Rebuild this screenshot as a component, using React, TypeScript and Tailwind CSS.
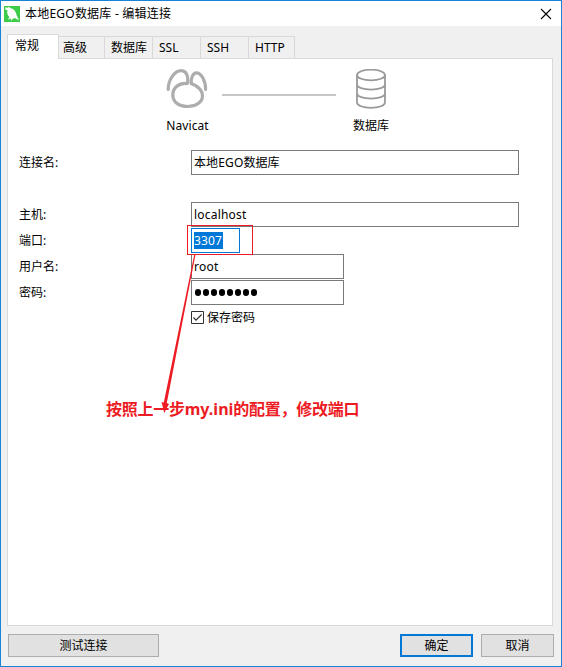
import React from 'react';

const tabs = [
  { label: '高级', width: 'w-[46px]', pad: 'pl-[4px]' },
  { label: '数据库', width: 'w-[48px]', pad: 'pl-[6px]' },
  { label: 'SSL', width: 'w-[48px]', pad: 'pl-[6px]' },
  { label: 'SSH', width: 'w-[48px]', pad: 'pl-[6px]' },
  { label: 'HTTP', width: 'w-[46px]', pad: 'pl-[6px]' },
];

function Row({ label, children }: { label: string; children: React.ReactNode }) {
  return (
    <div className="flex h-[26px] items-start">
      <div className="w-[172px] shrink-0 leading-[25px]">{label}</div>
      {children}
    </div>
  );
}

function Field({ className, children }: { className: string; children: React.ReactNode }) {
  return (
    <div className={`flex h-[25px] shrink-0 items-center border bg-white pl-[2px] leading-[20px] ${className}`}>
      {children}
    </div>
  );
}

function NavicatMark() {
  return (
    <svg className="-ml-px shrink-0" width="44" height="42" viewBox="0 0 44 42" fill="none" stroke="#adadad" strokeWidth="3.2" strokeLinecap="round" strokeLinejoin="round">
      <path d="M22 15.5C13 15 7.8 20 7.8 27C7.8 34 14 38.5 22.5 38.5C31 38.5 37.5 34 37.5 28C37.5 23 33 18.2 26.3 15.5" />
      <path d="M3.2 21.5C3.2 11 10 2.5 16.5 2.7C21.5 3 23.3 8 22.8 14L22 15.5" />
      <path d="M26.3 15.5C25.5 11 28 4.8 31.2 4.8C36.3 4.8 40.8 13 40.6 21.5" />
    </svg>
  );
}

function DatabaseMark() {
  return (
    <svg width="30" height="40" viewBox="0 0 30 40" fill="none" stroke="#999999" strokeWidth="1.8">
      <ellipse cx="15" cy="6" rx="14" ry="5.3" />
      <path d="M1 6V33.5C1 36.5 7 38.8 15 38.8S29 36.5 29 33.5V6M1 15.5C1 18.5 7 20.6 15 20.6S29 18.5 29 15.5M1 24.5C1 27.5 7 29.6 15 29.6S29 27.5 29 24.5" />
    </svg>
  );
}

export default function App() {
  return (
    <div className="relative flex h-[667px] w-[562px] flex-col overflow-hidden border border-[#1883d7] bg-[#f0f0f0] font-['Noto_Sans','Noto_Sans_CJK_SC',sans-serif] text-[12px] whitespace-nowrap text-black">
      <header className="flex h-[25px] shrink-0 items-center bg-white pr-[9px] pl-[3px]">
        <svg width="16" height="16" viewBox="0 0 16 16">
          <path fill="#3dcc4a" d="M0 0H16V16H0Z" />
          <path fill="white" d="M1.4 1.2L3.6 1.8L5.4 0.8L6 2C9.6 2.6 12 5.2 12.6 9L15 14.6L11.6 12.2L9.2 12.4L6.9 14.8L6.8 12.2L3.9 13.7L5.3 10.9C3.4 9 2.7 6.7 3.5 4.2L1.2 3.6Z" />
        </svg>
        <span className="ml-[5px] tracking-[0.22px]">本地EGO数据库 - 编辑连接</span>
        <svg className="ml-auto" width="12" height="12" viewBox="0 0 12 12" stroke="black" strokeWidth="1.1">
          <path d="M1 1L11 11M11 1L1 11" />
        </svg>
      </header>

      <nav className="flex h-[32px] shrink-0 items-end pl-[6px]">
        <div className="z-10 -mb-px h-[25px] w-[52px] border border-b-0 border-[#d9d9d9] bg-white pl-[7px] leading-[22px]">常规</div>
        {tabs.map((t) => (
          <div key={t.label} className={`h-[22px] border-t border-r border-[#d9d9d9] leading-[22px] ${t.width} ${t.pad}`}>
            {t.label}
          </div>
        ))}
      </nav>

      <main className="mr-[8px] ml-[6px] h-[568px] shrink-0 border border-[#d9d9d9] bg-white pl-[11px]">
        <div className="flex h-[91px] items-start pt-[9px]">
          <div className="ml-[145px] flex w-[47px] flex-col items-center">
            <NavicatMark />
            <span className="mt-[7px] leading-[18px] tracking-[0.1px]">Navicat</span>
          </div>
          <div className="mt-[26px] ml-[11px] h-[2px] w-[114px] bg-[#c8c8c8]" />
          <div className="ml-[16px] flex w-[38px] flex-col items-center pt-[1px]">
            <DatabaseMark />
            <span className="mt-[8px] leading-[18px]">数据库</span>
          </div>
        </div>

        <Row label="连接名:">
          <Field className="w-[328px] border-[#7a7a7a]">
            <span className="tracking-[0.12px]">本地EGO数据库</span>
          </Field>
        </Row>
        <div className="h-[26px]" />
        <Row label="主机:">
          <Field className="w-[328px] border-[#7a7a7a]">
            <span className="tracking-[0.2px]">localhost</span>
          </Field>
        </Row>
        <Row label="端口:">
          <Field className="w-[49px] border-[#0078d7]">
            <span className="h-[17px] w-[29px] bg-[#0078d7] leading-[17px] tracking-[0.15px] text-white">3307</span>
          </Field>
        </Row>
        <Row label="用户名:">
          <Field className="w-[153px] border-[#7a7a7a]">
            <span className="tracking-[0.25px]">root</span>
          </Field>
        </Row>
        <Row label="密码:">
          <Field className="w-[153px] border-[#7a7a7a]">
            <span className="flex gap-[2px] pl-px">
              {Array.from({ length: 8 }, (_, i) => (
                <i key={i} className="h-[7px] w-[6px] rounded-full bg-black" />
              ))}
            </span>
          </Field>
        </Row>
        <div className="mt-[3px] ml-[172px] flex h-[17px] items-center">
          <svg width="13" height="13" viewBox="0 0 13 13" fill="none">
            <path d="M.5.5H12.5V12.5H.5Z" stroke="#333333" />
            <path d="M2.5 6.5L5 9.2L10.6 3.5" stroke="#333333" strokeWidth="1.2" />
          </svg>
          <span className="ml-[3px] pt-px">保存密码</span>
        </div>
      </main>

      <footer className="flex items-start pt-[8px] pr-[7px] pl-[7px]">
        <button className="h-[23px] w-[151px] border border-[#adadad] bg-[#e1e1e1]">测试连接</button>
        <button className="ml-auto h-[23px] w-[73px] border-2 border-[#0078d7] bg-[#e1e1e1]">确定</button>
        <button className="ml-[8px] h-[23px] w-[73px] border border-[#adadad] bg-[#e1e1e1]">取消</button>
      </footer>

      <div className="absolute top-[224px] left-[186px] h-[30px] w-[66px] border border-[#ed1c24]" />
      <svg className="absolute top-[254px] left-[154px]" width="50" height="160" viewBox="0 0 50 160" fill="#ed1c24">
        <path d="M39.2 0L40.4 0L11.8 148L14 149L9.2 158L6.6 147L8.8 147.5Z" />
      </svg>
      <div className="absolute top-[396px] left-[105px] text-[16px] leading-[24px] font-bold tracking-[-0.25px] text-[#ed1c24]">
        按照上一步<span className="tracking-normal">my.ini</span>的配置，修改端口
      </div>
    </div>
  );
}
